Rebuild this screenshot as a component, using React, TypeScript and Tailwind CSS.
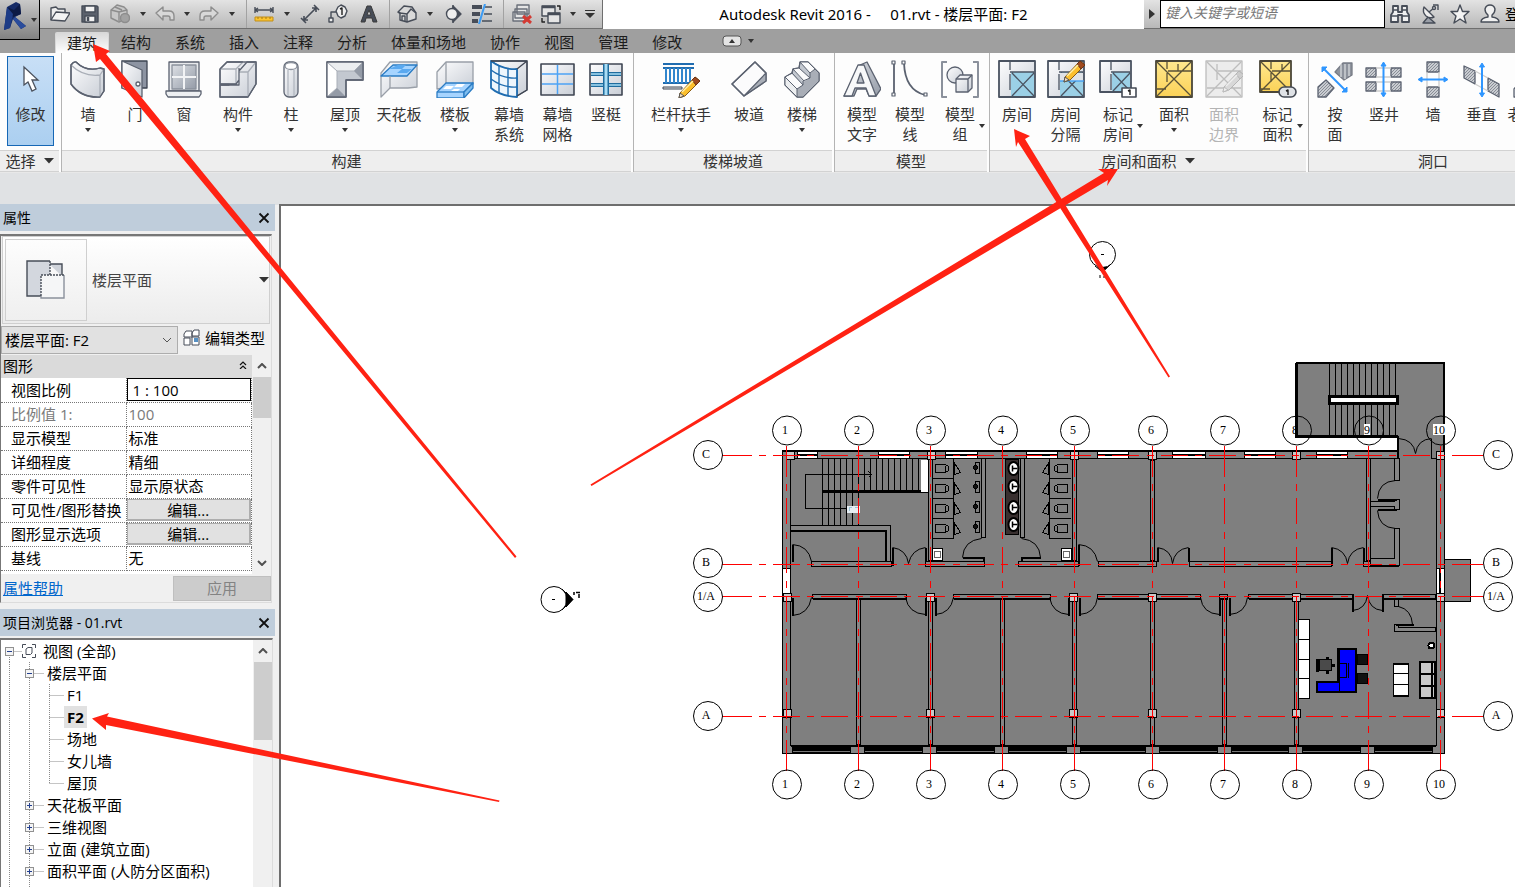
import React from "react";

type Kids = { children?: React.ReactNode };

function Caret({ className = "" }: { className?: string }) {
  return (
    <svg viewBox="0 0 6 4" className={"h-1 w-1.5 shrink-0 " + className} aria-hidden="true">
      <path d="M0 0H6L3 4Z" fill="#333" />
    </svg>
  );
}

function BigCaret() {
  return (
    <svg viewBox="0 0 10 6" className="h-1.5 w-2.5 shrink-0" aria-hidden="true">
      <path d="M0 0H10L5 5.5Z" fill="#333" />
    </svg>
  );
}

/* ---------- ribbon icons, 38 x 38 ---------- */

function Big({ children }: Kids) {
  return (
    <svg viewBox="0 0 38 38" className="h-[38px] w-[38px] shrink-0" fill="none" stroke="#5b6270" strokeWidth="1.3" strokeLinejoin="round" aria-hidden="true">
      <defs>
        <linearGradient id="steel" x1="0" y1="0" x2="1" y2="1">
          <stop offset="0" stopColor="#fdfdfe" />
          <stop offset="1" stopColor="#c9ced6" />
        </linearGradient>
        <linearGradient id="dark" x1="0" y1="0" x2="1" y2="1">
          <stop offset="0" stopColor="#dde0e5" />
          <stop offset="1" stopColor="#949ba7" />
        </linearGradient>
        <linearGradient id="yellow" x1="0" y1="0" x2="0" y2="1">
          <stop offset="0" stopColor="#ffe88f" />
          <stop offset="1" stopColor="#fbd257" />
        </linearGradient>
        <pattern id="hatch" width="3" height="3" patternUnits="userSpaceOnUse">
          <rect width="3" height="3" fill="#c9ccd1" stroke="none" />
          <path d="M0 3L3 0" stroke="#777c86" strokeWidth=".8" />
        </pattern>
      </defs>
      {children}
    </svg>
  );
}

const Pencil = ({ grey = false }: { grey?: boolean }) => (
  <g strokeWidth="1">
    <path d="M18 20L33 4L38 8L23 23L17 25Z" transform="translate(0 -3)" fill={grey ? "#d8d8d8" : "#fbbf2d"} stroke={grey ? "#b5b5b5" : "#8a5b14"} />
    <path d="M30 4L33 1L38 5L34 9Z" fill={grey ? "#ccc" : "#a04a20"} stroke={grey ? "#b5b5b5" : "#6b3413"} />
    <path d="M20 16L31 5" stroke={grey ? "#eee" : "#fff0a8"} strokeWidth="1.5" />
    <path d="M18 17L22 20L17 22Z" fill={grey ? "#eee" : "#f6dcb8"} stroke={grey ? "#bbb" : "#555"} />
  </g>
);

const IconWall = () => (
  <Big>
    <path d="M2 5Q5 1 7 2Q17 12 31 8L35 9V31L31 37Q12 38 2 24Z" fill="url(#steel)" />
    <path d="M2 5Q14 17 31 15L35 9M31 15V37" stroke="#a9aeb7" />
    <path d="M2 5Q5 1 7 2Q17 12 31 8L35 9V31L31 37Q12 38 2 24Z" />
  </Big>
);
const IconDoor = () => (
  <Big>
    <rect x="6" y="1" width="25" height="27" fill="#8d94a2" stroke="#3d4452" />
    <path d="M6 1L26 10V37L6 28Z" fill="url(#steel)" />
    <circle cx="22" cy="24" r="2" fill="#fff" />
  </Big>
);
const IconWindow = () => (
  <Big>
    <rect x="4" y="2" width="30" height="29" fill="#e8eaed" />
    <rect x="7" y="5" width="24" height="24" fill="url(#dark)" stroke="#8b919c" />
    <path d="M19 5V29M7 17H31" stroke="#f2f3f5" strokeWidth="2" />
    <path d="M1 31H36V34L34 37H3L1 34Z" fill="#eef0f2" />
  </Big>
);
const IconComponent = () => (
  <Big>
    <path d="M1 9L8 2H24L28 2H37V24L29 37H1V25H10V24H1Z" fill="url(#steel)" />
    <path d="M1 9H17V24H1M17 9L24 2M20 12H29L37 2M29 12V37" stroke="#a9aeb7" />
    <path d="M1 9L8 2H24M17 24L20 20V8M1 25H20V11L28 2H37V24L29 37H1V9M1 24H17" />
  </Big>
);
const IconColumn = () => (
  <Big>
    <rect x="12" y="2" width="14" height="35" rx="5" fill="url(#steel)" />
    <ellipse cx="19" cy="6" rx="6" ry="3.5" fill="#fff" stroke="#8b919c" />
    <path d="M16 10V36M22 10V36" stroke="#b3b8c0" />
  </Big>
);
const IconRoof = () => (
  <Big>
    <path d="M1 2H37V20H20V37H1Z" fill="#c3c8d0" />
    <path d="M1 2H37L28 11H11Z" fill="#eceef0" stroke="none" />
    <path d="M1 2L11 11V28L1 37Z" fill="#fff" stroke="none" />
    <path d="M28 11L37 2V20ZM11 28L20 37H1Z" fill="#949ba7" stroke="none" />
    <path d="M1 2L11 11H28L37 20M11 11V28L20 37M11 28L1 37M28 11L37 2" stroke="#a9aeb7" strokeWidth="1" />
    <path d="M1 2H37V20H20V37H1Z" />
  </Big>
);
const IconCeiling = () => (
  <Big>
    <path d="M1 13L10 2H37V27L28 28H10L1 37Z" fill="url(#steel)" stroke="#999fa8" />
    <path d="M1 16L13 5H37L27 16Z" fill="#a6d4ff" stroke="#2b7cc4" />
    <path d="M9 9L18 5H26L22 9ZM17 13L22 9H32L27 13Z" fill="#5aa9f0" stroke="none" />
    <path d="M10 16V28" stroke="#999fa8" />
  </Big>
);
const IconFloor = () => (
  <Big>
    <path d="M1 29V12L10 2H37V24Z" fill="url(#steel)" stroke="#999fa8" />
    <path d="M10 2V23" stroke="#999fa8" />
    <path d="M1 32L10 23H37L28 32V38H1Z" fill="#a6d4ff" stroke="#2b7cc4" />
    <path d="M28 32L37 23V28L28 38Z" fill="#7fbdee" stroke="#2b7cc4" />
    <path d="M1 32H28" stroke="#2b7cc4" />
    <path d="M10 26H18L15 29H7ZM21 24H29L26 27H18ZM18 29H24L22 31H15Z" fill="#fff" stroke="none" />
  </Big>
);
const IconCurtainSystem = () => (
  <Big>
    <path d="M1 1H37V30L27 36V10Q13 10 1 1Z" fill="url(#steel)" />
    <path d="M1 1Q13 10 27 9V37Q10 36 1 28Z" fill="#eef6fd" stroke="#1f6cb0" strokeWidth="1.8" />
    <path d="M1 10Q13 19 27 18M1 19Q13 28 27 27M9 6V33M18 9V36" stroke="#1f6cb0" strokeWidth="1.4" />
    <path d="M1 1H37V30L27 36M27 9L37 1" stroke="#3f4653" />
  </Big>
);
const IconCurtainGrid = () => (
  <Big>
    <rect x="2" y="4" width="33" height="31" fill="url(#steel)" stroke="#3f4653" strokeWidth="1.6" />
    <path d="M18.500 5V34M3 14H34M3 24H34" stroke="#4da3f5" strokeWidth="1.5" />
  </Big>
);
const IconMullion = () => (
  <Big>
    <rect x="3" y="4" width="32" height="31" fill="url(#steel)" stroke="#3f4653" strokeWidth="1.6" />
    <path d="M4 14H34M4 25H34" stroke="#1f6c9e" strokeWidth="4" />
    <path d="M4 14H34M4 25H34" stroke="#a9ddf5" strokeWidth="1.500" />
    <path d="M19 4V35" stroke="#1f6c9e" strokeWidth="6" />
    <path d="M19 4V35" stroke="#a9ddf5" strokeWidth="3" />
  </Big>
);
const IconRailing = () => (
  <Big>
    <path d="M1 4H32M1 8H32M1 23H32" stroke="#1f6cb0" strokeWidth="2" />
    <path d="M4 8V23M8 8V23M12 8V23M16 8V23M20 8V23M24 8V23M28 8V23" stroke="#3286cd" strokeWidth="2" />
    <path d="M1 27H20V29H1Z" fill="#e3e5e8" stroke="#3f4653" strokeWidth="1" />
    <g transform="translate(0 16)">
      <Pencil />
    </g>
  </Big>
);
const IconRamp = () => (
  <Big>
    <path d="M2 24L25 2L36 13V21L14 36Z" fill="#fbfbfc" />
    <path d="M14 36L36 13V21Z" fill="#a9aeb7" stroke="none" />
    <path d="M2 24L25 2L36 13V21L14 36ZM14 36L36 13" />
  </Big>
);
const IconStair = () => (
  <Big>
    <path d="M2 17L9 13L10 9L16 8L17 2H25L36 13V21L20 37H14L2 25Z" fill="#c3c8d0" />
    <path d="M17 2H25L32 9L27 13ZM10 9L16 8L27 18L21 22ZM2 17L9 14L20 25L14 29Z" fill="#fbfbfc" stroke="none" />
    <path d="M2 17L14 29V37L2 25Z" fill="#eceef0" stroke="none" />
    <path d="M14 29L20 25V22L27 18V14L32 9L36 13V21L20 37H14Z" fill="#a9aeb7" stroke="none" />
    <path d="M2 17L9 13L10 9L16 8L17 2H25L36 13V21L20 37H14L2 25ZM2 17L14 29V37M14 29L20 25V21L27 18V13L32 9M9 13L20 25M10 9L21 21M16 8L27 18M17 2L27 13" strokeWidth="1" />
  </Big>
);
const IconModelText = () => (
  <Big>
    <path d="M1 36L17 5L24 2L38 29L33 36H26L23 29H14L11 36Z" fill="url(#dark)" />
    <path d="M1 36L15 5H21L33 36H26L23 28H12L9 36ZM14 23H21L17.500 13Z" fill="#f7f8f9" />
  </Big>
);
const IconModelLine = () => (
  <Big>
    <path d="M3 3V35M13 3Q14 30 34 35" strokeWidth="1.8" />
    <g fill="#fff" strokeWidth="1.2">
      <rect x="1" y="1" width="3" height="3" />
      <rect x="1" y="33" width="3" height="3" />
      <rect x="11" y="1" width="3" height="3" />
      <rect x="33" y="33" width="3" height="3" />
    </g>
  </Big>
);
const IconModelGroup = () => (
  <Big>
    <path d="M6 2H1V37H6M32 2H37V37H32" stroke="#8b919c" strokeWidth="2" />
    <circle cx="14" cy="15" r="8" fill="url(#steel)" />
    <path d="M15 19L19 15H31V28L27 32H15Z" fill="url(#steel)" />
    <path d="M15 19H27V32M27 19L31 15" />
  </Big>
);
const RoomBase = ({ s = 38 }: { s?: number }) => (
  <g>
    <rect x="1" y="1" width={s - 2} height={s - 2} fill="url(#steel)" stroke="#4a5361" strokeWidth="1.8" />
    <rect x="13" y="12" width={s - 15} height={s - 14} fill="#9bd0e6" stroke="none" />
    <path d={`M12 2V10M12 14V30M12 12H${s - 2}M14 13L${s - 2} ${s - 2}M${s - 2} 13L14 ${s - 2}`} stroke="#4a5361" />
  </g>
);
const IconRoom = () => (
  <Big>
    <RoomBase />
  </Big>
);
const IconRoomSep = () => (
  <Big>
    <RoomBase />
    <rect x="13" y="13" width="23" height="8" fill="#dfe2e6" stroke="none" />
    <path d="M13 21H37" stroke="#3b9cf5" />
    <Pencil />
  </Big>
);
const IconTagRoom = () => (
  <Big>
    <RoomBase s={33} />
    <rect x="23" y="28" width="14" height="9" fill="#fff" stroke="#444a54" strokeWidth="1.6" />
    <path d="M29 31L31 30V35" stroke="#222" strokeWidth="1.4" />
  </Big>
);
const AreaBase = ({ s = 38 }: { s?: number }) => (
  <g>
    <rect x="1" y="1" width={s - 2} height={s - 2} fill="url(#yellow)" stroke="#4a4638" strokeWidth="1.8" />
    <path d={`M12 2V9M12 13V22M13 11H${s - 2}M2 29H11M23 4V11M2 2L${s - 2} ${s - 2}M${s - 2} 2L2 ${s - 2}`} stroke="#5a5237" />
  </g>
);
const IconArea = () => (
  <Big>
    <AreaBase />
  </Big>
);
const IconAreaEdge = () => (
  <Big>
    <g stroke="#bdbdbd">
      <rect x="1" y="1" width="36" height="36" fill="#ececec" />
      <path d="M2 2L36 36M36 2L2 36M12 4V20M13 11H36M2 28H36" />
    </g>
    <g transform="translate(1 10)">
      <Pencil grey />
    </g>
  </Big>
);
const IconTagArea = () => (
  <Big>
    <AreaBase s={33} />
    <rect x="20" y="27" width="17" height="10" rx="5" fill="#dfe2e6" stroke="#444a54" strokeWidth="1.6" />
    <path d="M27 31L29 30V35" stroke="#222" strokeWidth="1.4" />
  </Big>
);
const Blue = ({ d, heads }: { d: string; heads: string }) => (
  <g stroke="#2f96ff">
    <path d={d} strokeWidth="2" />
    <path d={heads} strokeWidth="1" fill="#2f96ff" />
  </g>
);
const IconByFace = () => (
  <Big>
    <path d="M19 12L27 3H36V15L28 20Z" fill="#8e939d" stroke="#777c86" />
    <path d="M2 37V27L10 20L18 28L10 37Z" fill="url(#hatch)" />
    <path d="M25 4V17M29 4V19M33 4V16" stroke="#d8dadd" />
    <Blue d="M8 9L29 30" heads="M6 7H11L6 12ZM31 32H26L31 27Z" />
  </Big>
);
const IconShaft = () => (
  <Big>
    <g fill="url(#hatch)">
      <rect x="1" y="8" width="10" height="9" />
      <rect x="26" y="8" width="10" height="9" />
      <rect x="1" y="22" width="10" height="9" />
      <rect x="26" y="22" width="10" height="9" />
    </g>
    <path d="M11 8H26M11 17H26M11 22H26M11 31H26" stroke="#ccc" />
    <Blue d="M18.500 4V35" heads="M18.500 2L21 6H16ZM18.500 37L21 33H16Z" />
  </Big>
);
const IconWallOpening = () => (
  <Big>
    <g fill="url(#hatch)">
      <rect x="13" y="2" width="12" height="10" />
      <rect x="13" y="27" width="12" height="10" />
    </g>
    <path d="M13 12V27M25 12V27" stroke="#ccc" />
    <Blue d="M6 19.500H32" heads="M4 19.500L8 17V22ZM34 19.500L30 17V22Z" />
  </Big>
);
const IconVertical = () => (
  <Big>
    <path d="M1 6L12 11V24L1 18Z" fill="url(#hatch)" />
    <path d="M25 18L36 24V37L25 31Z" fill="url(#hatch)" />
    <path d="M12 11L25 18M12 24L25 31" stroke="#ccc" />
    <Blue d="M19 5V35" heads="M19 3L21.500 7H16.500ZM19 37L21.500 33H16.500Z" />
  </Big>
);
const IconDormer = () => (
  <Big>
    <path d="M3 37V29L18 10L34 28V37Z" fill="url(#steel)" />
  </Big>
);

/* ---------- ribbon building blocks ---------- */

type ToolProps = {
  icon: React.ReactNode;
  label: string;
  second?: string;
  width: string;
  arrow?: "below" | "side";
  disabled?: boolean;
};

function Tool({ icon, label, second, width, arrow, disabled }: ToolProps) {
  return (
    <button type="button" disabled={disabled} className={"flex shrink-0 flex-col items-center " + width + (disabled ? " text-[#b4b4b4]" : " text-[#333]")}>
      {icon}
      <span className="mt-1.5 grid w-full grid-cols-[1fr_auto_1fr] items-center">
        <span />
        <span className="whitespace-nowrap text-center leading-5">
          {label}
          {second && (
            <>
              <br />
              {second}
            </>
          )}
        </span>
        {arrow === "side" ? <Caret className="mt-1 ml-1" /> : <span />}
      </span>
      {arrow === "below" && <Caret className="mt-1" />}
    </button>
  );
}

function Panel({ title, menu, className = "", children }: Kids & { title: string; menu?: boolean; className?: string }) {
  return (
    <section className="flex shrink-0 flex-col border-r border-[#b4b4b4]">
      <div className={"flex h-[97px] pt-[7px] " + className}>{children}</div>
      <h2 className="mr-0.5 flex h-[22px] items-center justify-center gap-2 border-y border-[#d2d2d2] bg-[#eeeeee] text-[#333]">
        {title}
        {menu && <BigCaret />}
      </h2>
    </section>
  );
}

/* ---------- quick access toolbar ---------- */

function QButton({ label, width, children }: Kids & { label: string; width: string }) {
  return (
    <button type="button" aria-label={label} className={"flex h-7 shrink-0 items-center justify-center " + width}>
      {children}
    </button>
  );
}

function Small({ children }: Kids) {
  return (
    <svg viewBox="0 0 20 20" className="h-5 w-5 shrink-0" fill="none" stroke="#474d58" strokeWidth="1.4" strokeLinejoin="round" aria-hidden="true">
      {children}
    </svg>
  );
}

const Sep = ({ width }: { width: string }) => (
  <span className={"flex h-7 shrink-0 justify-center " + width}>
    <span className="w-px bg-[#a2a2a2]" />
  </span>
);

function QuickAccess() {
  return (
    <div className="flex h-[29px] w-[563px] shrink-0 items-center border-r border-b border-[#6f6f6f] bg-linear-to-b from-[#e3e3e3] to-[#b8b8b8] pl-[5px]">
      <QButton label="打开" width="w-[30px]">
        <Small>
          <path d="M1 16V4L6 3L8 5H15V8" fill="#eee" />
          <path d="M1 16L6 8L20 9L15 17Z" fill="#f4f4f4" />
        </Small>
      </QButton>
      <QButton label="保存" width="w-[30px]">
        <Small>
          <path d="M2 2H17L18 3V18H2Z" fill="#5b616c" />
          <path d="M5 2H15V8H5Z" fill="#f2f2f2" />
          <path d="M5 12H15V18H5Z" fill="#f2f2f2" />
          <path d="M8 13V17" strokeWidth="2.500" />
        </Small>
      </QButton>
      <QButton label="同步" width="w-[30px]">
        <Small>
          <g stroke="#8d8d8d" fill="#c8c8c8">
            <path d="M1 6L7 1L14 3L17 6V14L9 18L1 14Z" />
            <path d="M1 6L9 8V18M9 8L17 6M5 3L12 6" />
            <circle cx="15" cy="14" r="4.500" fill="#a2a2a2" />
          </g>
        </Small>
      </QButton>
      <QButton label="同步选项" width="w-[16px]"><Caret /></QButton>
      <QButton label="放弃" width="w-[28px]">
        <Small>
          <path d="M1 9L8 3V7H14Q19 7 19 12V16H15V14Q15 12 13 12H8V16Z" stroke="#8d8d8d" fill="#d8d8d8" />
        </Small>
      </QButton>
      <QButton label="放弃列表" width="w-[16px]"><Caret /></QButton>
      <QButton label="重做" width="w-[28px]">
        <Small>
          <path d="M19 9L12 3V7H6Q1 7 1 12V16H5V14Q5 12 7 12H12V16Z" stroke="#8d8d8d" fill="#d8d8d8" />
        </Small>
      </QButton>
      <QButton label="重做列表" width="w-[18px]"><Caret /></QButton>
      <Sep width="w-[10px]" />
      <QButton label="测量" width="w-[26px]">
        <Small>
          <path d="M1 6H19M1 3V9M19 3V9M4 4L1 6L4 8M16 4L19 6L16 8" />
          <rect x="1" y="13" width="18" height="4" fill="#fcc42e" stroke="#c08e1a" strokeWidth="1" />
          <path d="M4 13V15M8 13V15M12 13V15M16 13V15" stroke="#a77a12" strokeWidth="1" />
        </Small>
      </QButton>
      <QButton label="测量选项" width="w-[20px]"><Caret /></QButton>
      <QButton label="对齐尺寸标注" width="w-[26px]">
        <Small>
          <path d="M4 16L16 4M4 12V16H8M12 4H16V8M1 14L6 19M14 1L19 6" strokeWidth="1.600" />
        </Small>
      </QButton>
      <QButton label="按类别标记" width="w-[30px]">
        <Small>
          <path d="M9 8H3V14" />
          <rect x="1" y="14" width="4" height="4" fill="#eee" />
          <path d="M10 3L13 1L17 3L19 7L17 12L13 14L10 12L8 7Z" fill="#eee" />
          <path d="M12 5L14 4V11" stroke="#222" />
        </Small>
      </QButton>
      <QButton label="文字" width="w-[32px]">
        <Small>
          <path d="M2 18L8 2H12L18 18H14L13 14H7L6 18ZM8 11H12L10 6Z" fill="#474d58" fillRule="evenodd" stroke="#3a3a3a" strokeWidth="1" />
        </Small>
      </QButton>
      <Sep width="w-[8px]" />
      <QButton label="默认三维视图" width="w-[28px]">
        <Small>
          <path d="M1 8L7 2L15 3L19 9V15L10 18L3 16V9Z" fill="#d9d9d9" />
          <path d="M10 18V10L14 5L19 9M1 8L3 9L10 10M5 17V12H8V18" />
        </Small>
      </QButton>
      <QButton label="三维视图选项" width="w-[18px]"><Caret /></QButton>
      <QButton label="剖面" width="w-[28px]">
        <Small>
          <path d="M10 2L18 10L10 18Z" fill="#474d58" />
          <path d="M10 1V19" />
          <circle cx="9" cy="10" r="5.500" fill="#eee" />
        </Small>
      </QButton>
      <QButton label="细线" width="w-[30px]">
        <Small>
          <path d="M0 3H10M0 10H8M0 17H6" strokeWidth="4" />
          <path d="M13 3H20M12 10H20M10 17H20" />
          <path d="M13 0L7 20" stroke="#3b9cf5" strokeWidth="2" />
        </Small>
      </QButton>
      <Sep width="w-[12px]" />
      <QButton label="关闭隐藏窗口" width="w-[26px]">
        <Small>
          <path d="M5 1H17V10H5ZM3 5H15V14H3ZM1 8H13V17H1Z" fill="#e5e5e5" stroke="#6a6f79" />
          <path d="M11 12L19 19M19 12L11 19" stroke="#d33a33" strokeWidth="3" />
        </Small>
      </QButton>
      <QButton label="切换窗口" width="w-[32px]">
        <Small>
          <rect x="1" y="2" width="13" height="10" fill="#e5e5e5" />
          <path d="M1 3H14" strokeWidth="2.500" />
          <rect x="7" y="9" width="12" height="10" fill="#e5e5e5" />
          <path d="M7 10H19" strokeWidth="2.500" />
          <path d="M16 2H19V6M4 18H1V14" stroke="#222" />
        </Small>
      </QButton>
      <QButton label="窗口列表" width="w-[12px]"><Caret /></QButton>
      <QButton label="自定义快速访问工具栏" width="w-[22px]">
        <svg viewBox="0 0 10 8" className="h-2 w-2.5" aria-hidden="true">
          <path d="M0 0H10V1H0ZM0 3H10L5 8Z" fill="#333" />
        </svg>
      </QButton>
    </div>
  );
}

function InfoCenter() {
  return (
    <div className="flex h-[29px] w-[371px] shrink-0 items-center overflow-hidden border-b border-[#6f6f6f] bg-linear-to-b from-[#e3e3e3] to-[#b8b8b8]">
      <button type="button" aria-label="展开" className="flex h-full w-4 shrink-0 items-center justify-center">
        <svg viewBox="0 0 6 10" className="h-2.5 w-1.5"><path d="M0 0V10L6 5Z" fill="#333" /></svg>
      </button>
      <input aria-label="搜索" placeholder="键入关键字或短语" className="h-7 w-[225px] shrink-0 border border-black bg-white px-1 pb-1 text-sm italic outline-none placeholder:text-[#777]" />
      <QButton label="搜索" width="w-[30px]">
        <Small>
          <path d="M3 2H8V8H12V2H17V8L19 11V18H12V11H8V18H1V11L3 8Z" fill="#f0f0f0" strokeWidth="1.800" />
          <path d="M1 12H8M12 12H19M3 6H8M12 6H17" />
        </Small>
      </QButton>
      <QButton label="通讯中心" width="w-[29px]">
        <Small>
          <path d="M3 19L8 13L15 19Z" fill="#9a9fa8" />
          <path d="M4 3Q2 8 6 12Q10 15 14 13Z" fill="#eee" />
          <path d="M9 8L14 4M13 1H18V6" />
          <circle cx="14" cy="4" r="1.500" fill="#eee" />
        </Small>
      </QButton>
      <QButton label="收藏夹" width="w-[31px]">
        <Small>
          <path d="M10 1L12.500 7.500H19L14 12L16 19L10 15L4 19L6 12L1 7.500H7.500Z" fill="#f4f4f4" />
        </Small>
      </QButton>
      <QButton label="帐户" width="w-[30px]">
        <Small>
          <path d="M1 18Q1 14 8 13V11Q5 9 5 5Q6 1 10 1Q14 1 15 5Q15 9 12 11V13Q19 14 19 18Z" fill="#f0f0f0" />
        </Small>
      </QButton>
      <a href="#login" className="shrink-0 text-black">登录</a>
    </div>
  );
}

const tabs = ["建筑", "结构", "系统", "插入", "注释", "分析", "体量和场地", "协作", "视图", "管理", "修改"];

function Header() {
  return (
    <header className="flex h-[53px] shrink-0 bg-[#9f9f9f]">
      <button type="button" aria-label="应用程序菜单" className="flex h-10 w-10 shrink-0 items-center gap-1 border-r border-b border-black bg-linear-to-b from-[#c9c9c9] to-[#828282] pl-1">
        <svg viewBox="0 0 23 28" className="mb-2 h-7 w-[23px]" aria-hidden="true">
          <path d="M3 5L12 0L16 2L17 12L11 15L22 24L17 27L9 17L6 26L0 28Z" fill="#152a66" />
          <path d="M3 5L10 8L16 2L17 12L9 15Z" fill="#0c1a45" />
          <path d="M9 17L11 15L22 24L17 27Z" fill="#2a4c9c" />
          <path d="M3 5L9 12L6 26L0 28Z" fill="#1d3c86" />
        </svg>
        <Caret />
      </button>
      <div className="flex min-w-0 grow flex-col">
        <div className="flex h-[29px]">
          <QuickAccess />
          <h1 className="flex h-full grow items-center justify-center whitespace-pre bg-white font-['Noto_Sans','Noto_Sans_CJK_SC',sans-serif] text-black">Autodesk Revit 2016 -     01.rvt - 楼层平面: F2</h1>
          <InfoCenter />
        </div>
        <nav className="flex h-6 items-end pl-[15px] text-[#1c1c1c]">
          {tabs.map((t, i) => (
            <a key={t} href={"#" + t} className={i === 0 ? "h-[21px] rounded-t-xs border border-b-0 border-[#d8d8d8] bg-linear-to-b from-[#d9d9d9] to-white px-[11px] leading-5" : "h-[21px] px-3 leading-[21px]"}>
              {t}
            </a>
          ))}
          <button type="button" aria-label="最小化功能区" className="mb-1.5 ml-7 flex items-center gap-1.5">
            <svg viewBox="0 0 20 12" className="h-3 w-5">
              <rect x="1" y="1" width="18" height="10" rx="3" fill="#e4e4e4" stroke="#555" />
              <path d="M7 8L10 4L13 8Z" fill="#333" />
            </svg>
            <Caret />
          </button>
        </nav>
      </div>
    </header>
  );
}

function Ribbon() {
  return (
    <div className="flex h-[120px] shrink-0 overflow-hidden border-b border-[#e8e8e8] bg-[#fdfdfd]">
      <Panel title="选择" menu className="w-[61px] pl-[7px]">
        <button type="button" className="-mt-1 flex h-[90px] w-[47px] flex-col items-center border border-[#1667b5] bg-linear-to-b from-[#c8dff6] to-[#abcff0] pt-2 text-[#333]">
          <svg viewBox="0 0 18 28" className="h-7 w-[18px]" aria-hidden="true">
            <path d="M2 2V20L6 17L10 26L14 24L10 15H16Z" fill="#fff" stroke="#4b515c" strokeWidth="1.300" />
          </svg>
          <span className="mt-[11px] leading-5">修改</span>
        </button>
      </Panel>
      <Panel title="构建" className="pr-0.5">
        <Tool icon={<IconWall />} label="墙" width="w-[52px]" arrow="below" />
        <Tool icon={<IconDoor />} label="门" width="w-[42px]" />
        <Tool icon={<IconWindow />} label="窗" width="w-[56px]" />
        <Tool icon={<IconComponent />} label="构件" width="w-[52px]" arrow="below" />
        <Tool icon={<IconColumn />} label="柱" width="w-[54px]" arrow="below" />
        <Tool icon={<IconRoof />} label="屋顶" width="w-[54px]" arrow="below" />
        <Tool icon={<IconCeiling />} label="天花板" width="w-[54px]" />
        <Tool icon={<IconFloor />} label="楼板" width="w-[58px]" arrow="below" />
        <Tool icon={<IconCurtainSystem />} label="幕墙" second="系统" width="w-[50px]" />
        <Tool icon={<IconCurtainGrid />} label="幕墙" second="网格" width="w-[47px]" />
        <Tool icon={<IconMullion />} label="竖梃" width="w-[50px]" />
      </Panel>
      <Panel title="楼梯坡道" className="px-px">
        <Tool icon={<IconRailing />} label="栏杆扶手" width="w-[92px]" arrow="below" />
        <Tool icon={<IconRamp />} label="坡道" width="w-[44px]" />
        <Tool icon={<IconStair />} label="楼梯" width="w-[62px]" arrow="below" />
      </Panel>
      <Panel title="模型" className="px-px">
        <Tool icon={<IconModelText />} label="模型" second="文字" width="w-[52px]" />
        <Tool icon={<IconModelLine />} label="模型" second="线" width="w-[44px]" />
        <Tool icon={<IconModelGroup />} label="模型" second="组" width="w-[56px]" arrow="side" />
      </Panel>
      <Panel title="房间和面积" menu className="px-px">
        <Tool icon={<IconRoom />} label="房间" width="w-[52px]" />
        <Tool icon={<IconRoomSep />} label="房间" second="分隔" width="w-[45px]" />
        <Tool icon={<IconTagRoom />} label="标记" second="房间" width="w-[60px]" arrow="side" />
        <Tool icon={<IconArea />} label="面积" width="w-[52px]" arrow="below" />
        <Tool icon={<IconAreaEdge />} label="面积" second="边界" width="w-[48px]" disabled />
        <Tool icon={<IconTagArea />} label="标记" second="面积" width="w-[59px]" arrow="side" />
      </Panel>
      <Panel title="洞口" className="pr-1 pl-px">
        <Tool icon={<IconByFace />} label="按" second="面" width="w-[50px]" />
        <Tool icon={<IconShaft />} label="竖井" width="w-[48px]" />
        <Tool icon={<IconWallOpening />} label="墙" width="w-[50px]" />
        <Tool icon={<IconVertical />} label="垂直" width="w-[47px]" />
        <Tool icon={<IconDormer />} label="老虎窗" width="w-[50px]" />
      </Panel>
    </div>
  );
}

/* ---------- left dock ---------- */

function DockTitle({ title }: { title: string }) {
  return (
    <div className="flex h-[27px] shrink-0 items-center justify-between bg-[#bfcddb] pr-[5px] pl-[3px] text-sm text-black">
      <h2>{title}</h2>
      <button type="button" aria-label={"关闭" + title}>
        <svg viewBox="0 0 12 12" className="h-3 w-3"><path d="M1.500 1.500L10.500 10.500M10.500 1.500L1.500 10.500" stroke="#111" strokeWidth="1.800" /></svg>
      </button>
    </div>
  );
}

function ScrollBar({ thumb, down }: { thumb: string; down?: boolean }) {
  return (
    <div className="flex w-[19px] shrink-0 flex-col items-center bg-[#f0f0f0]">
      <svg viewBox="0 0 10 6" className="my-2 h-1.5 w-2.5 shrink-0"><path d="M1 5L5 1L9 5" fill="none" stroke="#505050" strokeWidth="2" /></svg>
      <div className={"w-[18px] bg-[#cdcdcd] " + thumb} />
      {down && (
        <svg viewBox="0 0 10 6" className="mt-auto mb-2 h-1.5 w-2.5 shrink-0"><path d="M1 1L5 5L9 1" fill="none" stroke="#505050" strokeWidth="2" /></svg>
      )}
    </div>
  );
}

const EditButton = ({ label }: { label: string }) => (
  <button type="button" aria-label={label + "编辑"} className="flex h-[22px] w-full items-center justify-center border border-r-2 border-b-2 border-[#adadad] bg-[#e1e1e1]">
    编辑...
  </button>
);

const rows: { name: string; value: React.ReactNode; muted?: boolean }[] = [
  { name: "视图比例", value: <input aria-label="视图比例" defaultValue="1 : 100" className="block h-[23px] w-full border border-black bg-white px-[5px] outline-none" /> },
  { name: "比例值 1:", value: "100", muted: true },
  { name: "显示模型", value: "标准" },
  { name: "详细程度", value: "精细" },
  { name: "零件可见性", value: "显示原状态" },
  { name: "可见性/图形替换", value: <EditButton label="可见性/图形替换" /> },
  { name: "图形显示选项", value: <EditButton label="图形显示选项" /> },
  { name: "基线", value: "无" },
];

function Properties() {
  return (
    <section className="flex shrink-0 flex-col">
      <DockTitle title="属性" />
      <div className="mt-[3px] mr-[3px] flex flex-col border border-t-2 border-[#dcdcdc] border-t-[#777] border-l-[#777]">
        <button type="button" className="mx-px flex h-[88px] items-center border border-[#cfcfcf] bg-linear-to-b from-white to-[#ececec] py-0.5 pl-0.5 text-[#444]">
          <span className="flex h-[82px] w-[82px] items-center justify-center border border-[#cfcfcf] bg-linear-to-b from-[#fdfdfd] to-[#efefef]">
            <svg viewBox="0 0 40 40" className="h-10 w-10" fill="none" stroke="#474d58" strokeWidth="1.400" aria-hidden="true">
              <path d="M23 4H36V16" fill="#cfd3da" />
              <path d="M1 1H24V15H15V36H1Z" fill="#d3d7de" stroke="none" />
              <path d="M24 1H1V36H15" />
              <path d="M15 15H38V38H15Z" fill="#f5f6f7" stroke="none" />
              <path d="M15 36V38H38V15" stroke="#8b919c" />
              <path d="M24 1V15M15 36V15H38" strokeDasharray="2 1" />
            </svg>
          </span>
          <span className="ml-[5px] grow text-left">楼层平面</span>
          <BigCaret />
        </button>
        <div className="flex h-[31px] items-start pt-0.5">
          <div className="grid h-7 w-[177px] items-center">
            <select aria-label="类型" className="col-start-1 row-start-1 h-7 w-full appearance-none border border-[#adadad] bg-[#e1e1e1] px-[3px] text-black">
              <option>楼层平面: F2</option>
            </select>
            <svg viewBox="0 0 10 6" className="pointer-events-none col-start-1 row-start-1 mr-1.5 h-1.5 w-2.5 justify-self-end"><path d="M1 1L5 5L9 1" fill="none" stroke="#555" /></svg>
          </div>
          <button type="button" className="ml-[5px] flex h-6 items-center gap-1 text-black">
            <svg viewBox="0 0 18 18" className="h-[18px] w-[18px]" fill="#fff" stroke="#474d58" aria-hidden="true">
              <path d="M1 5L3 2H9V8H1ZM9 4L11 1H16V7H9ZM1 9H7V16H1ZM9 8H16V16H9Z" />
              <path d="M11 10H15M11 12H15" stroke="#1f6cb0" strokeWidth="1.500" />
            </svg>
            编辑类型
          </button>
        </div>
        <div className="flex h-[219px] overflow-hidden">
          <div className="grow bg-white text-black">
            <h3 className="flex h-[23px] items-center justify-between bg-[#dadada] px-0.5 pr-[5px]">
              图形
              <svg viewBox="0 0 8 8" className="mb-1 h-2 w-2"><path d="M1 4L4 1L7 4M1 8L4 5L7 8" fill="none" stroke="#111" strokeWidth="1.200" /></svg>
            </h3>
            <table className="w-full table-fixed border-collapse">
              <tbody>
                {rows.map((r) => (
                  <tr key={r.name} className={r.muted ? "h-6 text-[#7a7a7a]" : "h-6"}>
                    <th scope="row" className="w-[125px] border-r border-b border-dotted border-[#777] p-0 pl-[10px] text-left font-normal whitespace-nowrap leading-5">{r.name}</th>
                    <td className={"border-r border-b border-dotted border-[#777] p-0 leading-5" + (typeof r.value === "string" ? " pl-0.5" : "")}>{r.value}</td>
                  </tr>
                ))}
              </tbody>
            </table>
          </div>
          <ScrollBar thumb="h-[41px]" down />
        </div>
        <div className="flex h-7 items-center justify-between pl-0.5">
          <a href="#help" className="text-[#0066cc] underline">属性帮助</a>
          <button type="button" disabled className="h-[25px] w-[98px] border border-[#bfbfbf] bg-[#cccccc] text-[#838383]">应用</button>
        </div>
      </div>
    </section>
  );
}

type Guide = "v" | "tee" | "end" | "plus" | "minus" | "none";

function GuideCell({ kind, first }: { kind: Guide; first?: boolean }) {
  const boxed = kind === "plus" || kind === "minus";
  return (
    <svg viewBox="0 0 20 22" className="h-[22px] w-5 shrink-0 overflow-visible" fill="none" stroke="#8a8a8a" aria-hidden="true">
      {kind !== "none" && <path d={first ? "M9.500 11V22" : kind === "end" ? "M9.500 0V11" : "M9.500 0V22"} strokeDasharray="1 1" />}
      {kind !== "v" && kind !== "none" && <path d="M9.500 11.500H24" strokeDasharray="1 1" />}
      {boxed && (
        <>
          <rect x="5.500" y="7.500" width="8" height="8" fill="#f4f4f4" stroke="#919191" />
          <path d={kind === "plus" ? "M7 11.500H12M9.500 9V14" : "M7 11.500H12"} stroke="#24408f" />
        </>
      )}
    </svg>
  );
}

const tree: { label: string; guides: Guide[]; root?: boolean; active?: boolean }[] = [
  { label: "视图 (全部)", guides: ["minus"], root: true },
  { label: "楼层平面", guides: ["v", "minus"] },
  { label: "F1", guides: ["v", "v", "tee"] },
  { label: "F2", guides: ["v", "v", "tee"], active: true },
  { label: "场地", guides: ["v", "v", "tee"] },
  { label: "女儿墙", guides: ["v", "v", "tee"] },
  { label: "屋顶", guides: ["v", "v", "end"] },
  { label: "天花板平面", guides: ["v", "plus"] },
  { label: "三维视图", guides: ["v", "plus"] },
  { label: "立面 (建筑立面)", guides: ["v", "plus"] },
  { label: "面积平面 (人防分区面积)", guides: ["v", "plus"] },
  { label: "", guides: ["v", "v"] },
];

function Browser() {
  return (
    <section className="mt-1.5 flex min-h-0 grow flex-col">
      <DockTitle title="项目浏览器 - 01.rvt" />
      <div className="mt-0.5 mr-[2px] flex min-h-0 grow overflow-hidden border-t-2 border-r border-l border-[#777] border-r-[#dcdcdc] bg-white text-black">
        <ul className="-ml-px grow">
          {tree.map((n, i) => (
            <li key={i} className="flex h-[22px] items-center">
              {n.guides.map((g, k) => (
                <GuideCell key={k} kind={g} first={n.root} />
              ))}
              {n.root && (
                <svg viewBox="0 0 14 14" className="ml-0.5 h-3.5 w-3.5 bg-white" fill="none" stroke="#474d58" aria-hidden="true">
                  <path d="M4 .5H.5V4M10 .5H13.500V4M4 13.500H.5V10M10 13.500H13.500V10M4 5L6 3.500H10V9L8.500 10.500H4Z" />
                </svg>
              )}
              <span className={"ml-1 px-[3px] leading-[22px]" + (n.active ? " bg-[#e1e1e1] font-bold" : "")}>{n.label}</span>
            </li>
          ))}
        </ul>
        <ScrollBar thumb="h-[78px]" />
      </div>
    </section>
  );
}

/* ---------- floor plan ---------- */

const gridX = [787, 859, 931, 1003, 1075, 1153, 1225, 1297, 1369, 1441];
const gridY: [number, number, string][] = [
  [455, 455, "C"],
  [564, 563, "B"],
  [596, 597, "1/A"],
  [716, 716, "A"],
];

/* Alternating dash and gap lengths, starting with a dash. */
const dashX = [30, 7, 7, 7, ...Array(7).fill([27, 7, 7, 7, 27, 8, 7, 7]).flat(), 31];
const dashY = [31, 7, 7, 7, 26, 8, 7, 8, 26, 8, 7, 8, 26, 7, 7, 7, 28, 7, 7, 7, 27, 7, 7, 7, 31];

function dashes(pattern: number[], start: number, segment: (at: number, length: number) => string) {
  let at = start;
  let d = "";
  pattern.forEach((length, i) => {
    if (i % 2 === 0) d += segment(at, length);
    at += length;
  });
  return d;
}

const topWindows = [[798, 20], [879, 31], [946, 32], [1027, 31], [1098, 31], [1173, 33], [1245, 31], [1317, 31]];
const bottomWindows = [[793, 58], [865, 58], [937, 58], [1009, 58], [1081, 65], [1160, 58], [1232, 57], [1303, 58], [1375, 58]];
const upperBand = [[812, 80], [926, 59], [1019, 60], [1099, 58], [1190, 142], [1364, 35]];
const lowerBand = [[813, 94], [954, 97], [1098, 103], [1220, 8], [1249, 104], [1383, 53]];
const lowerWalls = [856, 928, 1000, 1072, 1150, 1222, 1294];
const upperWalls: [number, number, number][] = [[928, 459, 102], [1072, 459, 102], [1150, 461, 100], [1366, 459, 102], [981, 459, 79], [1020, 459, 79]];
const columns = [[786, 452], [927, 452], [1070, 452], [1148, 452], [1292, 452], [1436, 452], [783, 594], [926, 594], [1069, 594], [1148, 594], [1292, 594], [1436, 594], [783, 710], [926, 710], [1069, 710], [1148, 710], [1292, 710], [1436, 710]];
const range = (from: number, to: number, step: number) => {
  const out: number[] = [];
  for (let v = from; v <= to; v += step) out.push(v);
  return out;
};
const treads = (xs: number[], y1: number, y2: number) => xs.map((x) => `M${x} ${y1}V${y2}`).join("");

function Stall({ y, side }: { y: number; side: "left" | "right" }) {
  const flip = side === "right" ? "translate(2004 0) scale(-1 1)" : undefined;
  return (
    <g transform={flip}>
      <path d={`M933 ${y}H954V${y + 20}H933M954 ${y + 3}L961 ${y + 14}L955 ${y + 16}V${y + 3}`} />
      <path d={`M936 ${y + 6}H946L949 ${y + 8}V${y + 12}L946 ${y + 14}H936ZM946 ${y + 7}V${y + 13}`} />
    </g>
  );
}

function FloorPlan() {
  return (
    <svg viewBox="281 206 1234 681" className="h-[681px] w-[1234px] shrink-0" fill="none" stroke="#000" shapeRendering="crispEdges" role="img" aria-label="F2 楼层平面图">
      <g transform="translate(-0.5 -0.5)">
        {/* floor slabs */}
        <path d="M1297 363H1444V452H1398V437H1297Z" fill="#7f7f7f" strokeWidth="2" />
        <rect x="1444" y="560" width="27" height="42" fill="#7f7f7f" />
        <rect x="783" y="451" width="662" height="303" fill="#7f7f7f" />
        <path d="M1399 440H1443V470H1399Z" fill="#7f7f7f" stroke="none" />

        {/* exterior shell */}
        <path d="M783 451H1398V459H791V746H1437V459H1445V754H783Z" fill="#868686" />
        <path d="M783 451H1398V437M791 746H1436" strokeWidth="2" />
        <path d="M1399 437V459M1432 439V459H1436" />

        {/* annex stair */}
        <path d={treads(range(1330, 1398, 6), 364, 396) + treads(range(1330, 1398, 6), 405, 436)} />
        <rect x="1330" y="397" width="68" height="7" fill="#fff" strokeWidth="3" />
        <path d="M1297 363V437H1398" strokeWidth="3" />

        {/* interior walls */}
        <g fill="#868686">
          {upperWalls.map(([x, y, h]) => <rect key={x} x={x + 1} y={y} width="4" height={h} />)}
          {lowerWalls.map((x) => <rect key={x} x={x + 1} y="599" width="4" height="146" />)}
          {upperBand.map(([x, w]) => <rect key={x} x={x} y="562" width={w} height="5" />)}
          {lowerBand.map(([x, w]) => <rect key={x} x={x} y="595" width={w} height="4" />)}
          <path d="M1371 459H1400V481H1395V459M1371 502H1395V500H1400V510H1395V507H1371ZM1371 559H1395V529H1400V566H1371Z" />
          <path d="M791 526H891V562H886V531H791Z" />
          <path d="M1395 599V607H1399V599M1436 628H1399V625H1395V632H1436Z" />
        </g>
        <path d={lowerBand.map(([x, w]) => `M${x} 599H${x + w}`).join("") + "M791 531H886V561"} strokeWidth="2" />

        {/* windows */}
        {topWindows.map(([x, w]) => (
          <g key={x}>
            <rect x={x} y="451" width={w} height="8" fill="#fff" />
            <path d={`M${x} 451H${x + w}M${x} 455H${x + w}`} strokeWidth="2" />
          </g>
        ))}
        {bottomWindows.map(([x, w]) => (
          <g key={x}>
            <rect x={x} y="747" width={w} height="6" fill="#777" />
            <path d={`M${x} 749H${x + w}`} strokeWidth="4" />
          </g>
        ))}
        <path d="M783 569H791V594H783ZM1437 569H1445V594H1437Z" fill="#fff" />
        <path d="M1440 569V594" strokeWidth="2" />

        {/* main stair */}
        <path d={treads(range(823, 921, 6), 459, 491) + treads(range(823, 859, 6), 493, 525)} />
        <path d="M822 492H928" strokeWidth="3" />
        <rect x="921" y="460" width="7" height="32" fill="#fff" stroke="none" />
        <path d="M848 509H806V475H872M869 472L872 475L869 478" strokeWidth="1" />
        <rect x="847" y="506" width="13" height="7" fill="#e6edf2" stroke="none" />
        <path d="M849 508H852M850 507V511M855 508H859" stroke="#9cc4d6" />

        {/* doors */}
        <g shapeRendering="auto">
          <path d="M793 545Q809 546 812 562M893 548Q907 550 909 564Q912 550 926 548M1079 545Q1095 546 1098 562M1158 548Q1172 550 1173 564Q1175 550 1189 548M1332 548Q1346 550 1348 564Q1350 550 1364 548" />
          <path d="M1399 439Q1414 440 1416 454Q1418 440 1432 439M963 558Q964 541 982 539M1041 558Q1040 541 1022 539M1378 499Q1379 482 1396 481M1378 511Q1379 528 1396 529" />
          <path d="M793 616Q809 615 812 598M926 615Q909 614 906 598M936 615Q951 614 954 598M1069 615Q1053 614 1050 598M1080 615Q1096 614 1098 598M1220 615Q1203 614 1201 598M1230 615Q1246 614 1248 598M1353 611Q1366 610 1368 596Q1370 610 1383 611M1399 607Q1412 610 1413 625" />
        </g>
        <path d="M793 545V562M893 548V566M926 548V562M1079 545V566M1158 548V562M1189 548V562M1332 548V566M1364 548V562M963 558H984V562M1022 562V558H1041M1378 500H1397M1378 510H1397M793 598V616M926 598V616M936 598V616M1069 598V616M1080 598V616M1220 598V616M1230 598V616M1353 594V612M1383 594V612M1396 625H1414" strokeWidth="2" />

        {/* washrooms */}
        {[459, 479, 499, 519].map((y) => (
          <g key={y}>
            <Stall y={y} side="left" />
            <Stall y={y} side="right" />
          </g>
        ))}
        {[463, 482, 502, 522].map((y) => (
          <g key={y}>
            <path d={`M976 ${y}H980V${y + 11}H976Z`} />
            <circle cx="976" cy={y + 5} r="2" fill="#111" />
          </g>
        ))}
        <rect x="1006" y="460" width="13" height="75" fill="#382f2f" />
        {[469, 487, 508, 525].map((y) => (
          <g key={y} shapeRendering="auto">
            <ellipse cx="1014" cy={y} rx="5" ry="6.500" fill="#fff" strokeWidth="2" />
            <path d={`M1013 ${y - 3}V${y + 3}M1013 ${y}H1018`} strokeWidth="1.500" />
          </g>
        ))}
        <path d="M933 549H943V561H933ZM1062 549H1072V561H1062Z" fill="#fff" />
        <path d="M935 552H941V558H935ZM1064 552H1070V558H1064Z" strokeWidth="1" stroke="#666" />

        {/* office furniture */}
        <path d="M1299 620H1310V699H1299ZM1299 640H1310M1299 660H1310M1299 679H1310" fill="#fff" />
        <path d="M1338 649H1356V692H1317V682H1338Z" fill="#00f" strokeWidth="2" />
        <path d="M1340 649V692M1338 682H1316M1340 664H1347V678H1340M1349 663V678" />
        <rect x="1320" y="660" width="12" height="11" fill="#4a4a4a" />
        <path d="M1318 659V672M1332 666H1335M1328 657V660M1328 671V674" strokeWidth="3" />
        <path d="M1358 655H1368V665H1358ZM1358 674H1368V684H1358Z" fill="#111" />
        <path d="M1394 664H1409V696H1394ZM1394 674H1409M1394 685H1409" fill="#fff" />
        <path d="M1393 664H1409M1393 696H1409" strokeWidth="2" />
        <path d="M1420 662H1435V698H1420ZM1420 674H1435M1420 686H1435M1432 662V698" fill="#c8c8c8" strokeWidth="2" />
        <circle cx="1432" cy="646" r="3" fill="#fff" strokeWidth="2" />

        {/* structural columns */}
        {columns.map(([x, y]) => <rect key={x + "-" + y} x={x + 1} y={y} width="8" height="8" fill="#c9c9c9" />)}
      </g>

      {/* grid lines */}
      <g fill="#f00" stroke="none">
        {gridX.map((x) => <path key={x} d={dashes(dashY, 446, (y, n) => `M${x - 1} ${y}h1v${n}h-1z`)} />)}
        {gridY.map(([y]) => <path key={y} d={dashes(dashX, 722, (x, n) => `M${x} ${y}h${n}v1h${-n}z`)} />)}
      </g>

      {/* bubbles and elevation marks */}
      <g shapeRendering="auto">
        {gridX.map((x, i) => (
          <g key={x}>
            <circle cx={x} cy="430.500" r="14.500" />
            <circle cx={x} cy="784.500" r="14.500" />
            {i > 7 && <rect x={i === 9 ? x - 8 : x - 5} y="424" width={i === 9 ? 12 : 6} height="11" fill="#fff" stroke="none" />}
          </g>
        ))}
        {gridY.map(([, y]) => (
          <g key={y}>
            <circle cx="708" cy={y} r="14.500" />
            <circle cx="1498" cy={y} r="14.500" />
          </g>
        ))}
        <circle cx="554" cy="599.500" r="13" />
        <path d="M552 599.500H555M562 589L572.500 599.500L562 610" />
        <path d="M566 592V607L573 599.500Z" fill="#000" />
        <path d="M574 592V595M576 592.500H580M579 594V598" strokeWidth="1.500" />
        <circle cx="1102.500" cy="254.500" r="13" />
        <path d="M1101 254.500H1104M1092 263L1102.500 272L1113 263" stroke="none" />
        <path d="M1101 254.500H1104M1095 266L1102.500 272L1110 265" />
        <path d="M1097 267H1108L1102.500 272Z" fill="#000" stroke="none" />
        <path d="M1100 275V278M1103 277H1106" />
      </g>
      <g fill="#000" stroke="none" textAnchor="middle" className="font-['Liberation_Serif',serif] text-[12px]">
        {gridX.map((x, i) => (
          <g key={x}>
            <text x={x - 2} y="434">{i + 1}</text>
            <text x={x - 2} y="788">{i + 1}</text>
          </g>
        ))}
        {gridY.map(([, y, name]) => (
          <g key={y}>
            <text x="706" y={y + 3}>{name}</text>
            <text x="1496" y={y + 3}>{name}</text>
          </g>
        ))}
      </g>
    </svg>
  );
}

/* Tapered call-out arrows drawn over the whole window. */
function Callouts() {
  return (
    <svg viewBox="0 0 1515 887" className="pointer-events-none absolute top-0 left-0 h-[887px] w-[1515px]" fill="#ff2213" aria-hidden="true">
      <path d="M93 44L110 51L106 54L516.500 556.500L515 558L100 59L96 62Z" />
      <path d="M1118 169L1107 186L1108 180L591.500 486L590.500 484.500L1104 173L1098 169Z" />
      <path d="M1014 129L1030 136L1025 139L1170 376.500L1168.500 377.500L1018 142L1016 147Z" />
      <path d="M92 718.500L109 713L107 716.500L499.500 800.500L499 802L106 725L106 730Z" />
    </svg>
  );
}

export default function App() {
  return (
    <div className="relative flex h-screen flex-col overflow-hidden bg-[#f0f0f0] font-['Open_Sans','Noto_Sans_CJK_SC',sans-serif] text-[15px]">
      <Header />
      <Ribbon />
      <div className="h-8 shrink-0 bg-[#e0e2e4]" />
      <div className="-mt-px flex min-h-0 grow">
        <aside className="mr-1 flex w-[275px] shrink-0 flex-col">
          <Properties />
          <Browser />
        </aside>
        <main className="flex min-w-0 grow overflow-hidden border-t-2 border-l-2 border-[#6e6e6e] bg-white">
          <FloorPlan />
        </main>
      </div>
      <Callouts />
    </div>
  );
}
